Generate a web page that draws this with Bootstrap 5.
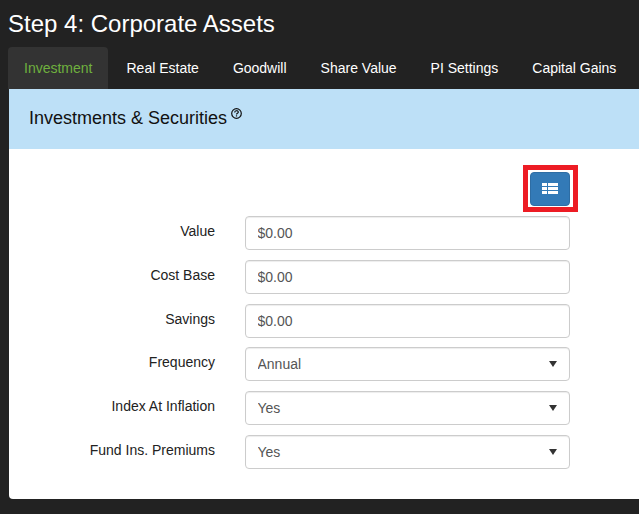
<!DOCTYPE html>
<html lang="en">
<head>
<meta charset="utf-8">
<title>Step 4: Corporate Assets</title>
<link rel="stylesheet" href="https://cdn.jsdelivr.net/npm/bootstrap@5.3.0/dist/css/bootstrap.min.css">
<style>
html,body{height:514px;overflow:hidden}
body{background:#222;font-family:"Liberation Sans",Arial,sans-serif;font-size:14px;color:#222;padding:0 0 0 8px}
.step-title{font-size:24px;line-height:26px;color:#fff;font-weight:400;margin:0;padding-top:11px;height:47px}
.step-tabs{border:0;flex-wrap:nowrap;height:42px;white-space:nowrap;width:640px;gap:0}
.step-tabs .nav-link{color:#fff;font-size:14px;line-height:20px;padding:11px 16px;border:0;margin:0 2px 0 0;height:42px;border-radius:4px 4px 0 0}
.step-tabs .nav-link.active{background:#333;color:#6fb03e;width:100px;margin-right:2.5px}
.step-panel{background:#fff;margin-left:1px;width:640px;height:410px;border-radius:0 0 0 4px;overflow:hidden}
.step-head{background:#bde0f7;height:60px;padding:18px 20px 0;font-size:18px;line-height:22px;color:#111}
.step-head svg{vertical-align:5px;margin-left:-1px}
.step-body{width:560px;padding-top:22px}
.tool-wrap{display:flex;justify-content:flex-end;height:45px}
.tool-mark{border:5px solid #ed1c24;padding:2px;margin-right:-9px;width:55px;height:47px;margin-top:-6px}
.tool-btn{background:#337ab7;border:1px solid #2e6da4;width:40px;height:34px;padding:0 0 1px;border-radius:4px;display:flex;align-items:center;justify-content:center}
.field-row{display:flex;align-items:flex-start;height:43.8px}
.field-label{width:206px;text-align:right;padding-top:7px;line-height:16px;flex:none;color:#222}
.field-box{width:325px;height:34px;margin-left:30px;flex:none;border:1px solid #ccc;border-radius:4px;color:#555;font-size:14px;line-height:20px;padding:6px 12px 6px 11.500px;box-shadow:inset 0 1px 1px rgba(0,0,0,.075)}
select.field-box{--bs-form-select-bg-img:none;background-image:url("data:image/svg+xml,%3Csvg xmlns='http://www.w3.org/2000/svg' width='8' height='6'%3E%3Cpath fill='%23333' d='M0 0h8L4 6z'/%3E%3C/svg%3E");background-repeat:no-repeat;background-position:right 12px center;background-size:8px 6px}
</style>
</head>
<body>
<h1 class="step-title">Step 4: Corporate Assets</h1>
<ul class="nav nav-tabs step-tabs">
<li class="nav-item"><a class="nav-link active" href="#">Investment</a></li>
<li class="nav-item"><a class="nav-link" href="#">Real Estate</a></li>
<li class="nav-item"><a class="nav-link" href="#">Goodwill</a></li>
<li class="nav-item"><a class="nav-link" href="#">Share Value</a></li>
<li class="nav-item"><a class="nav-link" href="#">PI Settings</a></li>
<li class="nav-item"><a class="nav-link" href="#">Capital Gains</a></li>
</ul>
<div class="step-panel">
<div class="step-head">Investments &amp; Securities
<svg width="11" height="11" viewBox="0 0 11 11" aria-hidden="true"><circle cx="5.500" cy="5.500" r="4.800" fill="none" stroke="#111" stroke-width="1.200"/><path d="M3.700 4.400c0-2.200 3.600-2.200 3.600-.2 0 1.100-1.800 1.200-1.800 2.400" fill="none" stroke="#111" stroke-width="1.200"/><rect x="4.900" y="7.300" width="1.200" height="1.200" fill="#111"/></svg>
</div>
<div class="step-body">
<div class="tool-wrap"><div class="tool-mark"><button type="button" class="btn tool-btn" aria-label="Table view">
<svg width="16" height="11" viewBox="0 0 16 11" aria-hidden="true"><path fill="#fff" d="M0 0h5v3H0zM6 0h10v3H6zM0 4h5v3H0zM6 4h10v3H6zM0 8h5v3H0zM6 8h10v3H6z"/></svg>
</button></div></div>
<form>
<div class="field-row"><label class="field-label">Value</label><input class="form-control field-box" value="$0.00"></div>
<div class="field-row"><label class="field-label">Cost Base</label><input class="form-control field-box" value="$0.00"></div>
<div class="field-row"><label class="field-label">Savings</label><input class="form-control field-box" value="$0.00"></div>
<div class="field-row"><label class="field-label">Frequency</label><select class="form-select field-box"><option>Annual</option></select></div>
<div class="field-row"><label class="field-label">Index At Inflation</label><select class="form-select field-box"><option>Yes</option></select></div>
<div class="field-row"><label class="field-label">Fund Ins. Premiums</label><select class="form-select field-box"><option>Yes</option></select></div>
</form>
</div>
</div>
<script src="https://cdn.jsdelivr.net/npm/bootstrap@5.3.0/dist/js/bootstrap.bundle.min.js"></script>
</body>
</html>
